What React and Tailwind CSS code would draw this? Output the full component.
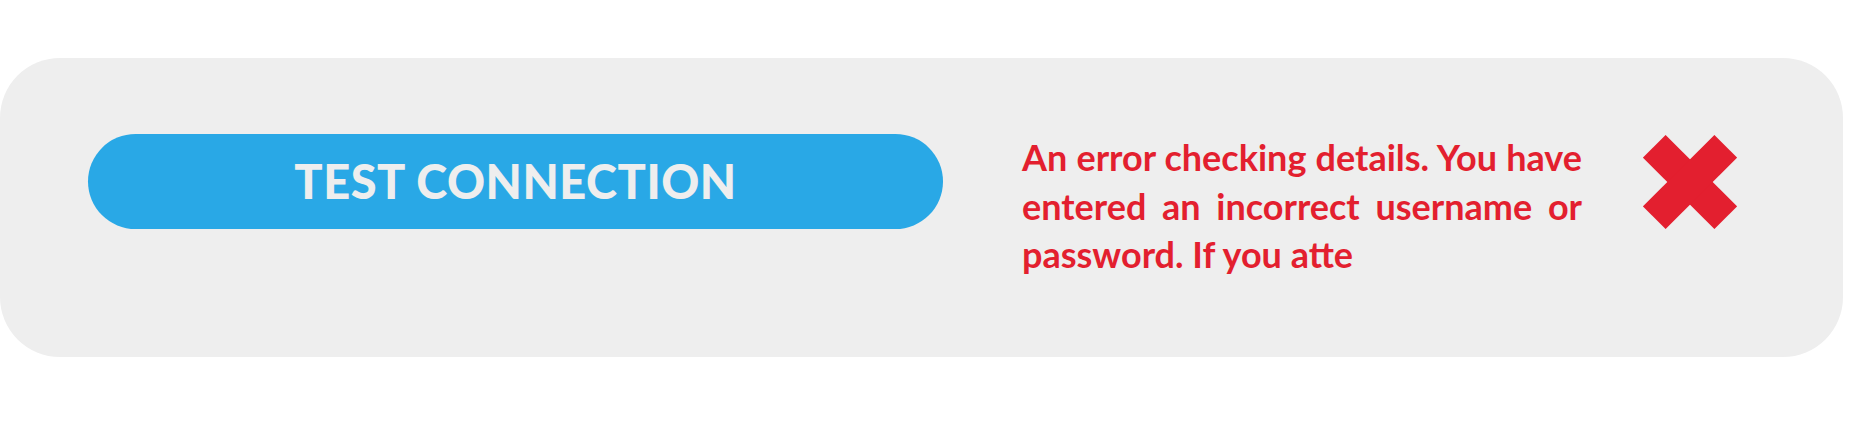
import React from 'react';

// Ligne de message d'erreur : chaque ligne est justifiée comme dans la capture
const errorLines = [
    "An error checking details. You have",
    "entered an incorrect username or",
];

function CrossIcon() {
    return (
        <svg width="94" height="94" viewBox="0 0 94 94" className="shrink-0">
            <g fill="#e31f2f" transform="rotate(45 47 47)">
                <rect x="-3.5" y="31" width="101" height="32" />
                <rect x="31" y="-3.5" width="32" height="101" />
            </g>
        </svg>
    );
}

export default function App() {
    return (
        <div className="w-screen min-h-screen bg-white pt-[58px]">
            <div className="mr-[18px] h-[299px] rounded-[60px] bg-[#eeeeee] flex items-start pl-[88px] pt-[76px]">
                <button
                    className="w-[855px] h-[95px] shrink-0 rounded-full bg-[#29a8e6] text-[#eeeeee] text-[47px] font-black tracking-[0.5px] flex items-center justify-center"
                    style={{ fontFamily: 'Lato, "Liberation Sans", sans-serif' }}
                >
                    TEST CONNECTION
                </button>

                <div
                    className="ml-[79px] w-[560px] shrink-0 -mt-[1px] text-[#e31f2f] text-[36px] font-bold leading-[48.5px]"
                    style={{ fontFamily: 'Lato, "Liberation Sans", sans-serif' }}
                >
                    {errorLines.map((line) => (
                        <p key={line} className="text-justify [text-align-last:justify]">{line}</p>
                    ))}
                    <p>password. If you atte</p>
                </div>

                <div className="ml-[61px] mt-[1px]">
                    <CrossIcon />
                </div>
            </div>
        </div>
    );
}
